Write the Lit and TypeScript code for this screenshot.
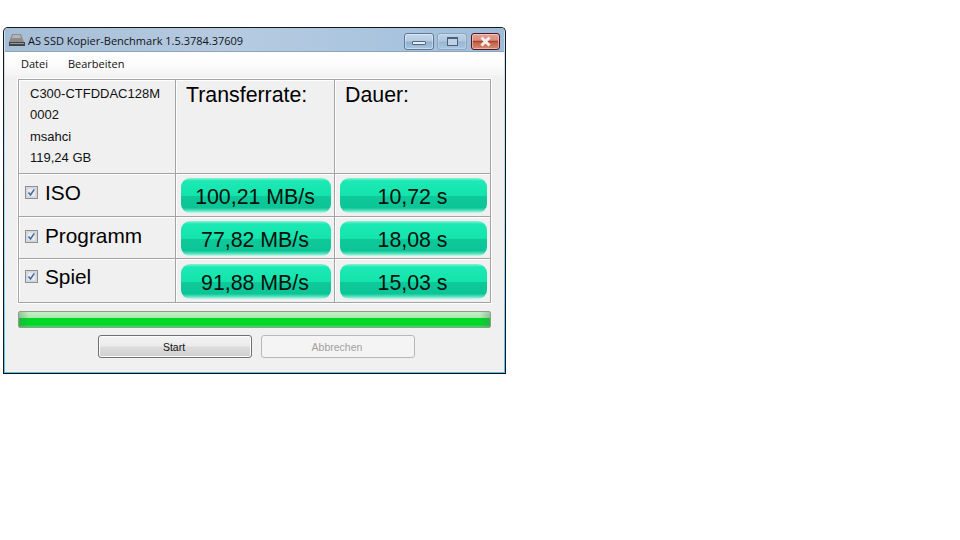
import { LitElement, html, css, svg } from "lit";
import { customElement } from "lit/decorators.js";

const ROWS = [
  { name: "ISO", rate: "100,21 MB/s", time: "10,72 s", cls: "r1" },
  { name: "Programm", rate: "77,82 MB/s", time: "18,08 s", cls: "r2" },
  { name: "Spiel", rate: "91,88 MB/s", time: "15,03 s", cls: "r3" },
];

@customElement("app-root")
export class AppRoot extends LitElement {
  static styles = css`
    :host { display: block; width: 960px; height: 540px; background: #fff; overflow: hidden; padding: 27px 0 0 3px; box-sizing: border-box; }
    .win { width: 503px; height: 347px; box-sizing: border-box; border: 1px solid #14181c; border-bottom-color: #0c0c0c; border-radius: 5px 5px 0 0;
      background: linear-gradient(#d3e2ef 0%, #a6d9f0 60%, #4fc3ee 100%); display: flex; flex-direction: column; padding: 0 1px 1px 1px; overflow: hidden; }
    .title { height: 23px; flex: none; display: flex; align-items: center; padding: 0 4px 0 3px; gap: 2px;
      background: linear-gradient(90deg, #a6bdd6 0%, #b6cbe0 45%, #a8c3de 80%, #9ebcd9 100%); font: 11px "Open Sans", sans-serif; color: #10141a; }
    .title-text { flex: 1; white-space: nowrap; padding-top: 1px; }
    .hd { flex: none; display: block; }
    .caps { display: flex; gap: 3px; align-items: flex-start; margin-top: 3px; }
    .cap { width: 30px; height: 17px; box-sizing: border-box; border: 1px solid #5d7898; border-radius: 3px; display: flex; align-items: center; justify-content: center;
      background: linear-gradient(#c6d9ea 0%, #b3cbe2 48%, #8fafce 52%, #a9c6df 100%); box-shadow: inset 0 0 0 1px rgba(255,255,255,.4); }
    .cap.max { border-color: #8ba4c0; margin-right: 1px; background: linear-gradient(#bcd1e5 0%, #aec7df 48%, #98b6d3 52%, #aac5de 100%); box-shadow: inset 0 0 0 1px rgba(255,255,255,.22); }
    .cap.close { width: 29px; border-color: #4e1622; background: linear-gradient(#e4a195 0%, #d98a7d 48%, #c46040 52%, #d28a78 100%); }
    .cap i { display: block; }
    .i-min { width: 14px; height: 4px; background: #e8eef5; border: 1px solid #53667e; border-radius: 1px; box-sizing: border-box; margin-top: 4px; }
    .i-max { width: 11px; height: 9px; box-sizing: border-box; border: 1px solid #4d6078; border-top-width: 2px; background: #bfd2e4; }
    .client { flex: 1; min-height: 0; display: flex; flex-direction: column; background: #f0f0f0; border-top: 1px solid #8aa4bd; }
    .menu { height: 25px; flex: none; display: flex; align-items: center; gap: 20px; padding: 0 0 2px 16px; background: linear-gradient(#fff 0%, #fbfbfb 60%, #f2f2f2 100%);
      font: 11px "Open Sans", sans-serif; color: #111; box-sizing: border-box; }
    .body { flex: 1; min-height: 0; display: flex; flex-direction: column; padding: 2px 12px 0 13px; }
    .table { width: 473px; height: 224px; box-sizing: border-box; flex: none; display: grid; grid-template-columns: 157px 159px 155px; grid-template-rows: 94px 43px 42px 43px;
      border: 1px solid #a3a3a3; box-shadow: 0 0 0 1px #fff; background: #f0f0f0; }
    .cell { box-sizing: border-box; border-right: 1px solid #a3a3a3; border-bottom: 1px solid #a3a3a3; box-shadow: inset 1px 1px 0 #fff; display: flex; align-items: center; min-width: 0; }
    .cell.r3 { border-bottom: 0; }
    .cell.last-col { border-right: 0; }
    .info { flex-direction: column; align-items: flex-start; justify-content: flex-start; padding: 3px 0 0 11px; font: 13px/21.3px "Liberation Sans", sans-serif; color: #111; }
    .head { align-items: flex-start; padding: 2px 0 0 10px; font: 21.33px/26px "Liberation Sans", sans-serif; color: #000; }
    .name { padding-left: 6px; gap: 7px; font: 20.8px "Liberation Sans", sans-serif; color: #000; padding-bottom: 3px; }
    .name.r1 { padding-bottom: 5px; }
    .name.r3 { padding-bottom: 8px; }
    .check { width: 13px; height: 13px; flex: none; display: block; }
    .val { padding: 1px 3px 0 5px; justify-content: center; }
    .pill { width: 100%; height: 35px; border-radius: 9px; display: flex; align-items: center; justify-content: center; font: 21.33px "Liberation Sans", sans-serif; color: #04100c;
      background: linear-gradient(#8bf2d4 0, #1ce9b4 3px, #14e4ac 50%, #0ec99a 52%, #0cc596 85%, #5fe6c4 94%, #cdf6ea 100%); padding: 4px 2px 0 0; box-sizing: border-box; }
    .bar { width: 473px; height: 17px; flex: none; margin-top: 8px; box-sizing: border-box; border: 1px solid #8f9d90; border-radius: 2px; overflow: hidden;
      background: linear-gradient(#c8efca 0%, #a9e8ae 40%, #00d926 42%, #00d62a 85%, #3de25a 100%); position: relative; }
    .bar i { position: absolute; top: 0; bottom: 0; width: 10px; }
    .bar i.l { left: 0; background: linear-gradient(90deg, rgba(90,130,100,.4), rgba(90,130,100,0)); }
    .bar i.r { right: 0; background: linear-gradient(270deg, rgba(90,130,100,.4), rgba(90,130,100,0)); }
    .actions { display: flex; justify-content: flex-start; gap: 9px; margin: 7px 0 0 80px; }
    .btn { width: 154px; height: 23px; box-sizing: border-box; border: 1px solid #707070; border-radius: 3px; display: flex; align-items: center; justify-content: center; padding-right: 2px;
      font: 10.5px "Liberation Sans", sans-serif; color: #111; background: linear-gradient(#f3f3f3 0%, #ebebeb 48%, #dddddd 52%, #cfcfcf 100%); box-shadow: inset 0 0 0 1px #fbfbfb; }
    .btn.off { border-color: #b8b8b8; background: #f4f4f4; box-shadow: none; color: #a0a0a0; }
  `;

  private hdIcon() {
    return svg`<svg class="hd" width="18" height="14" viewBox="0 0 18 14">
      <path d="M4 1h9l3 8H1z" fill="#8d8d8d"/>
      <path d="M5 2h7l1 3H4z" fill="#b5b5b5"/>
      <rect x="1" y="9" width="16" height="4" fill="#444"/>
      <rect x="2" y="10" width="14" height="1" fill="#999"/>
    </svg>`;
  }

  private check() {
    return svg`<svg class="check" viewBox="0 0 13 13">
      <rect x=".5" y=".5" width="12" height="12" fill="#dde0e6" stroke="#8e8f8f"/>
      <rect x="2" y="2" width="9" height="9" fill="#e8eaf0" stroke="#b6bcc8" stroke-width=".6"/>
      <path d="M3.5 6.5l2 2.5 3.8-5.6" fill="none" stroke="#4a6a9c" stroke-width="1.6"/>
    </svg>`;
  }

  render() {
    return html`<div class="win">
      <div class="title">
        ${this.hdIcon()}
        <span class="title-text">AS SSD Kopier-Benchmark 1.5.3784.37609</span>
        <div class="caps">
          <div class="cap"><i class="i-min"></i></div>
          <div class="cap max"><i class="i-max"></i></div>
          <div class="cap close">
            <svg width="25" height="11" viewBox="0 0 25 11"><path d="M0 5.5h25" stroke="#a8482a" stroke-width="1.5"/><path d="M8.5 1.5l8 8M16.5 1.5l-8 8" stroke="#f4eeee" stroke-width="3"/></svg>
          </div>
        </div>
      </div>
      <div class="client">
        <div class="menu"><span>Datei</span><span>Bearbeiten</span></div>
        <div class="body">
          <div class="table">
            <div class="cell info"><span>C300-CTFDDAC128M</span><span>0002</span><span>msahci</span><span>119,24 GB</span></div>
            <div class="cell head">Transferrate:</div>
            <div class="cell head last-col">Dauer:</div>
            ${ROWS.map((r) => html`
              <div class="cell name ${r.cls}">${this.check()}<span>${r.name}</span></div>
              <div class="cell val ${r.cls}"><div class="pill">${r.rate}</div></div>
              <div class="cell val last-col ${r.cls}"><div class="pill">${r.time}</div></div>
            `)}
          </div>
          <div class="bar"><i class="l"></i><i class="r"></i></div>
          <div class="actions">
            <div class="btn">Start</div>
            <div class="btn off">Abbrechen</div>
          </div>
        </div>
      </div>
    </div>`;
  }
}
